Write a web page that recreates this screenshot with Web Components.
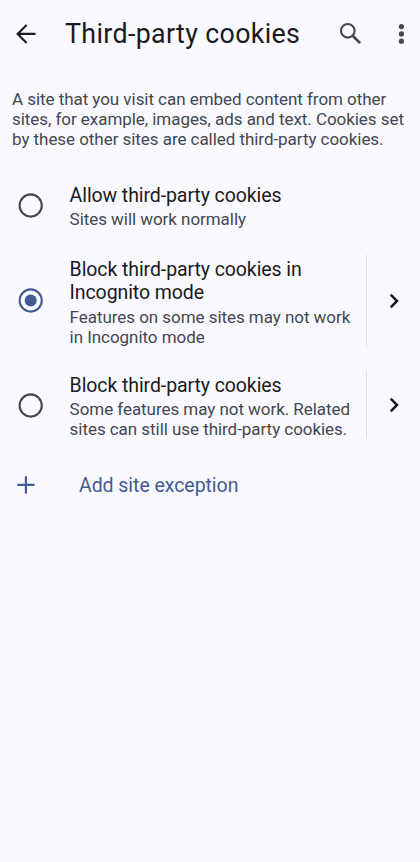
<!DOCTYPE html>
<html lang="en">
<head>
<meta charset="utf-8">
<title>Third-party cookies</title>
<style>
html,body{margin:0;background:#faf9ff}
body{font-family:Roboto,"Liberation Sans",sans-serif;color:#191b21}
</style>
</head>
<body>
<cookie-settings></cookie-settings>
<script>
const define = (name, html) => customElements.define(name, class extends HTMLElement {
  constructor() {
    super();
    const t = document.createElement('template');
    t.innerHTML = html;
    this.attachShadow({mode: 'open'}).append(t.content.cloneNode(true));
  }
});

define('app-bar', `<style>
:host{display:flex;align-items:center;height:67px;box-sizing:border-box;padding-left:14px;padding-right:7px}
svg{display:block;flex:none}
h1{margin:1px 0 0 27px;font:400 26.8px/34px Roboto,sans-serif;letter-spacing:.34px;white-space:nowrap;flex:1}
.menu{margin-left:27px}
</style>
<svg width="24" height="24" viewBox="0 0 24 24" fill="none" stroke="#191b21" stroke-width="2.1"><path d="M21.5 11.9H4M12.6 2.9 3.6 11.9l9 9"/></svg>
<h1><slot></slot></h1>
<svg width="24" height="24" viewBox="0 0 24 24" fill="none" stroke="#44474f"><circle cx="9.8" cy="8.8" r="6.8" stroke-width="2.1"/><path stroke-width="2.7" d="m14.7 13.7 7.4 7.4"/></svg>
<svg class="menu" width="24" height="24" viewBox="0 0 24 24" fill="#44474f"><circle cx="12.4" cy="4.6" r="2.6"/><circle cx="12.4" cy="11.9" r="2.6"/><circle cx="12.4" cy="19.2" r="2.6"/></svg>`);

define('radio-mark', `<style>
:host{display:block;width:25px;height:25px;color:#44474f}
:host([checked]){color:#435b91}
svg{display:block}
.dot{display:none}
:host([checked]) .dot{display:block}
</style>
<svg width="25" height="25" viewBox="0 0 25 25"><circle cx="12.7" cy="12.5" r="11.1" fill="none" stroke="currentColor" stroke-width="2.1"/><circle class="dot" cx="12.7" cy="12.5" r="6" fill="currentColor"/></svg>`);

define('expand-button', `<style>
:host{display:flex;align-items:center;justify-content:center;width:54px;padding-right:1px;border-left:1px solid #dbdbe1;flex:none;box-sizing:border-box}
svg{display:block}
</style>
<svg width="24" height="24" viewBox="0 0 24 24" fill="none" stroke="#17191e" stroke-width="2.5"><path d="m9.7 5.7 6.3 6.3-6.3 6.3"/></svg>`);

define('cookie-option', `<style>
:host{display:flex;align-items:stretch;margin-bottom:24px}
.mark{width:52px;padding-left:18px;box-sizing:border-box;display:flex;align-items:center;flex:none}
.text{flex:1;margin-left:17.6px;padding-top:3px;white-space:nowrap}
.title{display:block;font-size:19.5px;line-height:23.3px;letter-spacing:-.09px}
.sub{display:block;margin-top:2.2px;font-size:17px;line-height:20px;letter-spacing:-.05px;color:#44474f}
</style>
<div class="mark"><slot name="mark"></slot></div>
<div class="text"><slot class="title" name="title"></slot><slot class="sub"></slot></div>
<slot name="action"></slot>`);

define('add-exception', `<style>
:host{display:flex;align-items:center;color:#435b91;font-size:19.5px;letter-spacing:-.05px;line-height:24px;padding-left:14px;margin-top:34px}
svg{display:block;margin-right:41px}
</style>
<svg width="24" height="24" viewBox="0 0 24 24" fill="none" stroke="currentColor" stroke-width="2.2"><path d="M3.3 10.8h17.2M11.9 2.2v17.2"/></svg><slot></slot>`);

define('cookie-settings', `<style>
:host{display:block;width:420px;height:862px;background:#faf9ff;overflow:hidden}
p{margin:22px 0 32px;padding-left:12px;font-size:17px;line-height:20px;letter-spacing:-.05px;color:#44474f;white-space:nowrap}
.first{margin-bottom:25.6px}
.last{padding-bottom:1px}
</style>
<app-bar>Third-party cookies</app-bar>
<p>A site that you visit can embed content from other<br>sites, for example, images, ads and text. Cookies set<br>by these other sites are called third-party cookies.</p>
<cookie-option class="first"><radio-mark slot="mark"></radio-mark><span slot="title">Allow third-party cookies</span>Sites will work normally</cookie-option>
<cookie-option><radio-mark slot="mark" checked></radio-mark><span slot="title">Block third-party cookies in<br>Incognito mode</span>Features on some sites may not work<br>in Incognito mode<expand-button slot="action"></expand-button></cookie-option>
<cookie-option class="last"><radio-mark slot="mark"></radio-mark><span slot="title">Block third-party cookies</span>Some features may not work. Related<br>sites can still use third-party cookies.<expand-button slot="action"></expand-button></cookie-option>
<add-exception>Add site exception</add-exception>`);
</script>
</body>
</html>
